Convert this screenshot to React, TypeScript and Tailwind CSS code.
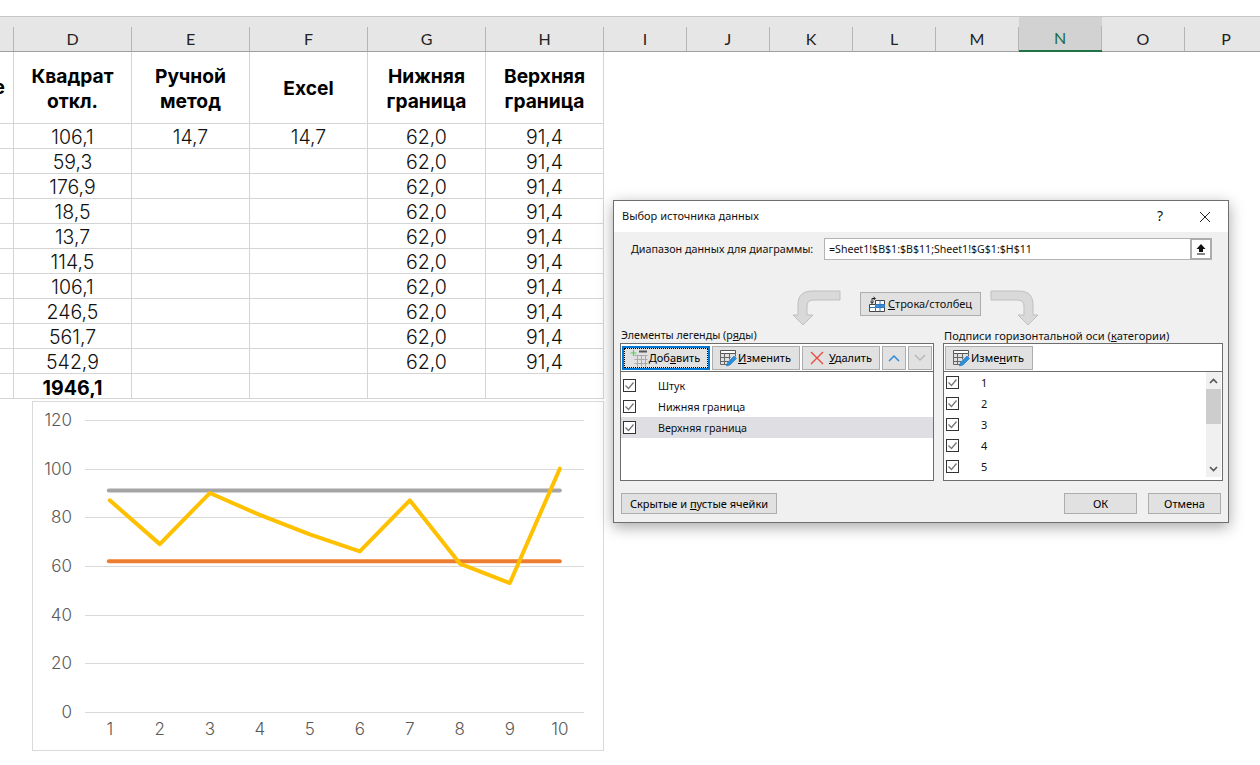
import React from "react";

const letters = ["D", "E", "F", "G", "H", "I", "J", "K", "L", "M", "N", "O", "P"];
const d = ["106,1", "59,3", "176,9", "18,5", "13,7", "114,5", "106,1", "246,5", "561,7", "542,9"];
const cols = "grid grid-cols-[14px_118px_118px_118px_118px_118px_83px_83px_83px_83px_83px_83px_83px_83px]";
const cell = "min-h-0 overflow-hidden border-r border-b border-[#d4d4d4] flex items-center justify-center text-center";

function HeaderCell({ children, one }: { children: React.ReactNode; one?: boolean }) {
  return <div className={`${cell} ${one ? "pt-[1px]" : "pt-[3px]"} font-bold text-[19.2px] leading-[25px] text-black`}>{children}</div>;
}

function Row({ v, e, f, g, h, bold }: { v: string; e?: string; f?: string; g?: string; h?: string; bold?: boolean }) {
  return (
    <div className="grid grid-cols-[14px_118px_118px_118px_118px_118px] grid-rows-[25px] h-[25px] text-[19.5px] leading-[24px] font-[350] text-[#111]">
      <div className="border-r border-b border-[#d4d4d4]" />
      <div className={`${cell} pt-[2px] ${bold ? "font-bold text-black text-[19.6px] pt-[3px]" : ""}`}>{v}</div>
      <div className={`${cell} pt-[2px]`}>{e}</div>
      <div className={`${cell} pt-[2px]`}>{f}</div>
      <div className={`${cell} pt-[2px]`}>{g}</div>
      <div className={`${cell} pt-[2px]`}>{h}</div>
    </div>
  );
}

function Chart() {
  const y = (n: number) => 310 - n * 2.433;
  const x = (i: number) => 76.8 + i * 50;
  const vals = [87, 69, 90, 81, 73, 66, 87, 61, 53, 100];
  const pts = vals.map((v, i) => `${x(i)},${y(v)}`).join(" ");
  return (
    <div className="ml-[32px] mt-[2px] w-[572px] h-[350px] border border-[#d9d9d9] bg-white">
      <svg width="570" height="348" className="block">
        {[0, 20, 40, 60, 80, 100, 120].map((n) => (
          <g key={n}>
            <line x1="52" x2="551" y1={Math.round(y(n)) + 0.5} y2={Math.round(y(n)) + 0.5} stroke="#d9d9d9" strokeWidth="1" />
            <text x="39" y={y(n) + 6} textAnchor="end" fontSize="17" fill="#595959" fontFamily="Inter, sans-serif" fontWeight="300">{n}</text>
          </g>
        ))}
        {vals.map((_, i) => (
          <text key={i} x={x(i)} y="333" textAnchor="middle" fontSize="17" fill="#595959" fontFamily="Inter, sans-serif" fontWeight="300">{i + 1}</text>
        ))}
        <polyline points={`${x(0) - 1},${y(91)} ${x(9)},${y(91)}`} fill="none" stroke="#a5a5a5" strokeWidth="4" strokeLinecap="round" />
        <polyline points={`${x(0) - 1},${y(62)} ${x(9)},${y(62)}`} fill="none" stroke="#ed7d31" strokeWidth="4" strokeLinecap="round" />
        <polyline points={pts} fill="none" stroke="#ffc000" strokeWidth="4" strokeLinecap="round" strokeLinejoin="round" />
      </svg>
    </div>
  );
}

function GridIcon({ kind }: { kind: "add" | "edit" | "swap" }) {
  if (kind === "add") {
    return (
      <svg width="18" height="18" viewBox="0 0 18 18" className="shrink-0">
        <path d="M4.5 6.5h13M4.5 10.5h13M4.5 14.5h13M7.5 6v11.5M11.5 6v11.5M15.5 6v11.5" stroke="#a9a9a9" fill="none" />
        <path d="M9 2.5h8" stroke="#555" strokeWidth="2" />
        <path d="M3.5 1v6M0.5 4h6" stroke="#5ecb5e" strokeWidth="1.2" />
      </svg>
    );
  }
  if (kind === "edit") {
    return (
      <svg width="18" height="18" viewBox="0 0 18 18" className="shrink-0">
        <path d="M1.5 1.5h15v3h-15z" fill="#fff" stroke="#555" />
        <path d="M1.5 4.5v11h7M1.5 8.5h10M1.5 12.5h8M5.5 4.5v11M10.5 4.5v6M16.5 4.5v3" fill="none" stroke="#666" />
        <path d="M7.5 17l1-3.5 6.5-6.5 2.5 2.5-6.5 6.5z" fill="#2b8fdc" stroke="#1b76bd" strokeWidth="0.6" />
      </svg>
    );
  }
  return (
    <svg width="16" height="16" viewBox="0 0 16 16" className="shrink-0">
      <path d="M6.5 4.5h9v11h-15v-7h6z" fill="#fff" stroke="#444" />
      <path d="M6.5 8.5h9v3h-9zM6.5 11.5v4M11 4.5v11M6.5 11.5h-6" fill="#3f8fd8" stroke="#2f78bd" />
      <path d="M3 7V2.5h3M4.5 1l2 1.5-2 1.5M1.5 5.5l1.5 2 1.5-2" fill="none" stroke="#222" />
    </svg>
  );
}

function Check() {
  return (
    <svg width="13" height="13" viewBox="0 0 13 13" className="shrink-0">
      <rect x="0.5" y="0.5" width="12" height="12" fill="#fff" stroke="#333" />
      <path d="M2.5 6.5l3 3 5-6" fill="none" stroke="#777" strokeWidth="1.3" />
    </svg>
  );
}

const btn = "flex items-center justify-center bg-[#e1e1e1] border border-[#adadad] text-black";

function Dialog() {
  return (
    <div className="absolute left-[613px] top-[200px] w-[616px] h-[323px] flex flex-col border border-[#6e6e6e] bg-[#f0f0f0] shadow-[0_4px_14px_rgba(0,0,0,0.35)] font-['Noto_Sans',sans-serif] text-[11px] text-[#111] leading-[14px]">
      <div className="h-[31px] shrink-0 bg-white flex items-center pl-[8px] pr-[17px]">
        <span className="flex-1 text-[11px] -mt-[2px]">Выбор источника данных</span>
        <span className="text-[14px] mr-[36px] -mt-[2px]">?</span>
        <svg width="12" height="12" viewBox="0 0 12 12"><path d="M1 1l10 10M11 1L1 11" stroke="#222" strokeWidth="1" fill="none" /></svg>
      </div>

      <div className="flex items-center h-[22px] mt-[6px] pl-[17px]">
        <span className="w-[193px] text-[10.75px]"><u>Д</u>иапазон данных для диаграммы:</span>
        <div className="w-[388px] h-[22px] flex items-center bg-white border border-[#b4b4b4] pl-[4px]">
          <span className="flex-1 text-[10.6px]">=Sheet1!$B$1:$B$11;Sheet1!$G$1:$H$11</span>
          <div className="w-[22px] h-[22px] -mr-px border-[2px] border-[#acacac] flex items-center justify-center bg-white">
            <svg width="12" height="12" viewBox="0 0 12 12"><path d="M6 1L1.5 6H4v3h4V6h2.5z M2 10.5h8v1H2z" fill="#111" /></svg>
          </div>
        </div>
      </div>

      <div className="flex items-start h-[36px] mt-[32px] pl-[179px]">
        <svg width="58" height="36" viewBox="0 0 58 36" className="-mt-[2px]">
          <path d="M57 1H30C19 1 15 6 15 15v10H10l10 10 10-10h-6V17c0-5 2-7 8-7h25z" transform="translate(-10 0)" fill="#d9d9d9" stroke="#bfbfbf" />
        </svg>
        <div className="w-[121px] h-[24px] ml-[9px] flex items-center justify-center gap-[3px] bg-[#e1e1e1] border border-[#adadad] text-[11px]">
          <GridIcon kind="swap" />
          <span><u>С</u>трока/столбец</span>
        </div>
        <svg width="58" height="36" viewBox="0 0 58 36" className="ml-[9px] -mt-[2px]">
          <path d="M1 1h27c11 0 15 5 15 14v10h5L38 35 28 25h6V17c0-5-2-7-8-7H1z" fill="#d9d9d9" stroke="#bfbfbf" />
        </svg>
      </div>

      <div className="flex pl-[6px] gap-[10px]">
        <div className="w-[314px] flex flex-col">
          <div className="h-[15px] text-[10.7px] leading-[15px] pl-[1px]">Элементы легенды (р<u>я</u>ды)</div>
          <div className="h-[29px] border border-[#6d6d6d] bg-white flex items-center gap-[2px] pl-[1px]">
            <div className={`${btn} h-[24px] w-[88px] gap-[1px] pr-[2px] !border-[2px] !border-[#0078d7] outline-dotted outline-1 -outline-offset-[3px] outline-black text-[11px]`}>
              <GridIcon kind="add" /><span>Доб<u>а</u>вить</span>
            </div>
            <div className={`${btn} h-[24px] w-[88px] gap-[1px] pr-[2px] text-[11px]`}>
              <GridIcon kind="edit" /><span><u>И</u>зменить</span>
            </div>
            <div className={`${btn} h-[24px] w-[78px] gap-[5px] text-[11px]`}>
              <svg width="14" height="14" viewBox="0 0 14 14"><path d="M1 1l12 12M13 1L1 13" stroke="#e84c3d" strokeWidth="1.4" fill="none" /></svg>
              <span><u>У</u>далить</span>
            </div>
            <div className={`${btn} h-[24px] w-[24px]`}>
              <svg width="12" height="8" viewBox="0 0 12 8"><path d="M1 7l5-5 5 5" stroke="#2d8ad8" strokeWidth="1.5" fill="none" /></svg>
            </div>
            <div className={`${btn} h-[24px] w-[24px]`}>
              <svg width="12" height="8" viewBox="0 0 12 8"><path d="M1 1l5 5 5-5" stroke="#b8b8b8" strokeWidth="1.5" fill="none" /></svg>
            </div>
          </div>
          <div className="h-[110px] -mt-px border border-[#6d6d6d] bg-white pt-[3px] flex flex-col">
            {["Штук", "Нижняя граница", "Верхняя граница"].map((t, i) => (
              <div key={t} className={`h-[21px] flex items-center pl-[2px] ${i === 2 ? "bg-[#dfdfe3]" : ""}`}>
                <Check />
                <span className="ml-[22px] text-[10.7px]">{t}</span>
              </div>
            ))}
          </div>
        </div>

        <div className="w-[280px] flex flex-col ml-[-1px]">
          <div className="h-[15px] text-[11.15px] leading-[15px] pl-[1px]">Подписи горизонтальной оси (<u>к</u>атегории)</div>
          <div className="h-[29px] border border-[#6d6d6d] bg-white flex items-center pl-[1px]">
            <div className={`${btn} h-[24px] w-[88px] gap-[1px] pr-[2px] text-[11px]`}>
              <GridIcon kind="edit" /><span>Изме<u>н</u>ить</span>
            </div>
          </div>
          <div className="h-[110px] -mt-px border border-[#6d6d6d] bg-white flex">
            <div className="flex-1 flex flex-col">
              {[1, 2, 3, 4, 5].map((n) => (
                <div key={n} className="h-[21px] flex items-center pl-[2px]">
                  <Check />
                  <span className="ml-[22px] text-[11px]">{n}</span>
                </div>
              ))}
            </div>
            <div className="w-[15px] h-[105px] mr-[1px] bg-[#f0f0f0] flex flex-col items-center">
              <div className="h-[17px] flex items-center">
                <svg width="9" height="6" viewBox="0 0 9 6"><path d="M1 5l3.5-3.5L8 5" stroke="#555" strokeWidth="1.6" fill="none" /></svg>
              </div>
              <div className="w-full h-[35px] bg-[#cdcdcd]" />
              <div className="flex-1" />
              <div className="h-[17px] flex items-center">
                <svg width="9" height="6" viewBox="0 0 9 6"><path d="M1 1l3.5 3.5L8 1" stroke="#555" strokeWidth="1.6" fill="none" /></svg>
              </div>
            </div>
          </div>
        </div>
      </div>

      <div className="flex items-center pl-[7px] mt-[12px] text-[11px]">
        <div className={`${btn} h-[21px] w-[156px]`}><span>Скрытые и <u>п</u>устые ячейки</span></div>
        <div className="flex-1" />
        <div className={`${btn} h-[21px] w-[73px]`}>ОК</div>
        <div className={`${btn} h-[21px] w-[73px] ml-[11px] mr-[7px]`}>Отмена</div>
      </div>
    </div>
  );
}

export default function App() {
  return (
    <div className="relative w-[1260px] h-[765px] overflow-hidden bg-white font-['Inter',sans-serif]">
      <div className="h-[16px]" />
      <div className={`${cols} h-[36px] bg-[#e6e6e6] border-t border-[#c6c6c6] border-b-[1px] border-b-[#9f9f9f] font-['Lato',sans-serif] text-[16px] text-[#222]`}>
        <div className="flex items-end"><div className="w-full h-[24px] border-r border-[#b5b5b5]" /></div>
        {letters.map((l) => (
          <div key={l} className={`flex items-end ${l === "N" ? "bg-[#d2d2d2] border-b-2 border-[#217346] text-[#1d6b40] -mb-px" : ""}`}>
            <div className="w-full h-[24px] border-r border-[#b5b5b5] flex items-center justify-center">{l}</div>
          </div>
        ))}
      </div>

      <div className="grid grid-cols-[14px_118px_118px_118px_118px_118px] grid-rows-[72px] h-[72px]">
        <div className="border-r border-b border-[#d4d4d4] flex items-center justify-end pr-[8px] overflow-hidden font-bold text-[19.2px] text-black">е</div>
        <HeaderCell>Квадрат<br />откл.</HeaderCell>
        <HeaderCell>Ручной<br />метод</HeaderCell>
        <HeaderCell one>Excel</HeaderCell>
        <HeaderCell>Нижняя<br />граница</HeaderCell>
        <HeaderCell>Верхняя<br />граница</HeaderCell>
      </div>

      {d.map((v, i) => (
        <Row key={i} v={v} e={i === 0 ? "14,7" : undefined} f={i === 0 ? "14,7" : undefined} g="62,0" h="91,4" />
      ))}
      <Row v="1946,1" bold />

      <Chart />
      <Dialog />
    </div>
  );
}
